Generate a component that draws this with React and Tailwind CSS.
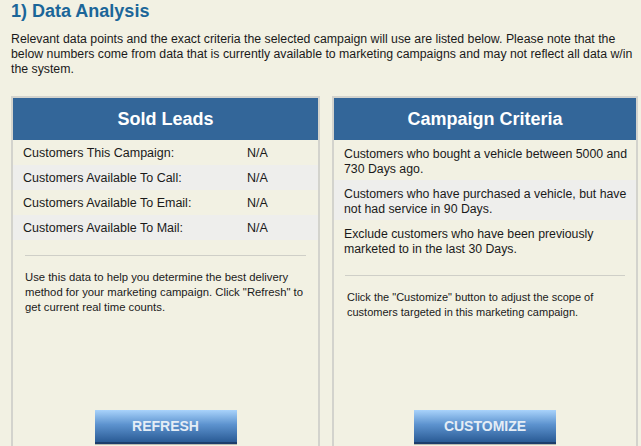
export default function App() {
  const rows = [
    "Customers This Campaign:",
    "Customers Available To Call:",
    "Customers Available To Email:",
    "Customers Available To Mail:",
  ];
  const criteria = [
    "Customers who bought a vehicle between 5000 and 730 Days ago.",
    "Customers who have purchased a vehicle, but have not had service in 90 Days.",
    "Exclude customers who have been previously marketed to in the last 30 Days.",
  ];
  const btn =
    "w-[142px] h-[34px] border-b-2 border-[#1c3d6b] bg-[linear-gradient(to_bottom,#a9d3fb,#5d93cf_45%,#2a5b95)] shadow-[0_1px_0_#b9b9b0] text-[14px] font-bold text-[#e4edf6] flex items-center justify-center";
  return (
    <div className="h-[446px] overflow-hidden bg-[#f2f1e3] pl-[11px] pr-[2px] text-[#1a1a1a] font-['Liberation_Sans',Arial,sans-serif]">
      <h1 className="text-[18px] leading-[22px] font-bold text-[#1b6699]">1) Data Analysis</h1>
      <p className="mt-[10px] text-[12.3px] leading-[15px]">
        Relevant data points and the exact criteria the selected campaign will use are listed below. Please note that the below numbers come from data that is currently available to marketing campaigns and may not reflect all data w/in the system.
      </p>
      <div className="mt-[19px] flex gap-[12px]">
        <div className="w-[309px] border-2 border-[#d3d3cd] bg-[#f2f1e3]">
          <div className="h-[42px] pt-[1px] bg-[#336699] flex items-center justify-center text-white font-bold text-[18px]">
            Sold Leads
          </div>
          <div className="h-[306px] flex flex-col">
            {rows.map((r, i) => (
              <div key={r} className={`h-[25px] pt-[2px] flex items-center px-[10px] text-[12.5px] ${i % 2 ? "bg-[#eeeeec]" : ""}`}>
                <span className="w-[224px]">{r}</span>
                <span>N/A</span>
              </div>
            ))}
            <div className="mt-[15px] mx-[12px] border-t border-[#cfcfc8]" />
            <p className="mt-[14px] pl-[12px] pr-[6px] text-[11.3px] leading-[15px]">
              Use this data to help you determine the best delivery method for your marketing campaign. Click "Refresh" to get current real time counts.
            </p>
            <div className="mt-auto mb-[2px] flex justify-center">
              <div className={btn}>REFRESH</div>
            </div>
          </div>
        </div>
        <div className="w-[306px] border-2 border-[#d3d3cd] bg-[#f2f1e3]">
          <div className="h-[42px] pt-[1px] bg-[#336699] flex items-center justify-center text-white font-bold text-[18px]">
            Campaign Criteria
          </div>
          <div className="h-[306px] flex flex-col">
            {criteria.map((c, i) => (
              <div key={c} className={`pl-[10px] pr-[3px] pt-[7px] pb-[3px] text-[12.3px] leading-[15px] ${i % 2 ? "bg-[#eeeeec]" : ""}`}>
                {c}
              </div>
            ))}
            <div className="mt-[15px] mx-[11px] border-t border-[#cfcfc8]" />
            <p className="mt-[14px] px-[13px] text-[11px] leading-[15px]">
              Click the "Customize" button to adjust the scope of customers targeted in this marketing campaign.
            </p>
            <div className="mt-auto mb-[2px] flex justify-center">
              <div className={btn}>CUSTOMIZE</div>
            </div>
          </div>
        </div>
      </div>
    </div>
  );
}
